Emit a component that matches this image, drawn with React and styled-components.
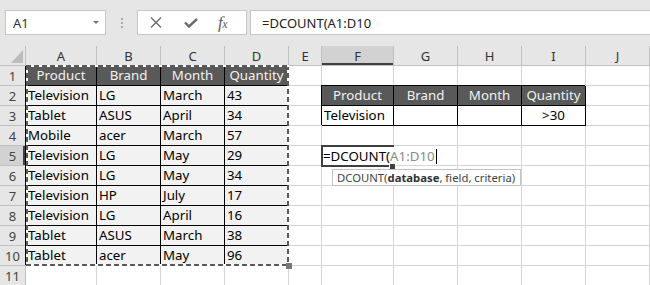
import styled, { createGlobalStyle } from 'styled-components';

const GlobalStyle = createGlobalStyle`
    html, body {
        margin: 0;
        padding: 0;
        background: #ffffff;
        overflow: hidden;
    }
    body {
        font-family: "Noto Sans", "Liberation Sans", sans-serif;
    }
`

const Window = styled.div`
    width: 650px;
    height: 285px;
    overflow: hidden;
    background: #ffffff;
`

const Toolbar = styled.div`
    height: 46px;
    box-sizing: border-box;
    padding: 10px 0 0 5px;
    background: #e6e6e6;
    display: flex;
    align-items: flex-start;
`

const NameBox = styled.div`
    width: 101px;
    height: 25px;
    box-sizing: border-box;
    background: #ffffff;
    border: 1px solid #c6c6c6;
    display: flex;
    align-items: center;
    justify-content: space-between;
    padding: 0 6px 0 7px;
    font-size: 13px;
    color: #333333;
`

const Caret = styled.span`
    width: 0;
    height: 0;
    border-left: 3.5px solid transparent;
    border-right: 3.5px solid transparent;
    border-top: 3.5px solid #6f6f6f;
`

const Dots = styled.div`
    width: 2px;
    margin: 8px 14px 0 15px;
    display: flex;
    flex-direction: column;
    gap: 2px;

    span {
        width: 2px;
        height: 2px;
        background: #a9a9a9;
    }
`

const FxBox = styled.div`
    width: 110px;
    height: 25px;
    box-sizing: border-box;
    background: #ffffff;
    border: 1px solid #c6c6c6;
    display: flex;
    align-items: center;
    padding-left: 12px;
    gap: 22px;
`

const FxLabel = styled.span`
    font-family: "Liberation Serif", "DejaVu Serif", serif;
    font-style: italic;
    font-size: 17px;
    color: #5f5f5f;
    margin-left: -2px;
    letter-spacing: -0.5px;

    small {
        font-size: 12px;
    }
`

const FormulaInput = styled.div`
    flex: 1;
    height: 25px;
    margin-left: 3px;
    box-sizing: border-box;
    background: #ffffff;
    border: 1px solid #c6c6c6;
    border-right: none;
    display: flex;
    align-items: center;
    padding-left: 11px;
    font-size: 13px;
    color: #222222;
`

const Sheet = styled.div`
    position: relative;
    display: grid;
    grid-template-columns: 26px 71px 64px 64px 64px 33px 72px 64px 64px 64px 64px;
    grid-auto-rows: 20px;
`

const Corner = styled.div`
    background: #e6e6e6;
    border-right: 1px solid #c0c0c0;
    border-bottom: 1px solid #c0c0c0;
    box-sizing: border-box;
    position: relative;

    svg {
        position: absolute;
        left: 11px;
        top: 4px;
    }
`

const ColHead = styled.div`
    box-sizing: border-box;
    background: ${(p) => (p.$active ? '#d2d2d2' : '#e6e6e6')};
    border-right: 1px solid #c0c0c0;
    border-bottom: 1px solid #c0c0c0;
    box-shadow: ${(p) => (p.$active ? 'inset 0 -2px 0 #404040' : 'none')};
    display: flex;
    align-items: center;
    justify-content: center;
    font-size: 13px;
    color: #333333;
`

const RowHead = styled.div`
    box-sizing: border-box;
    background: ${(p) => (p.$active ? '#d2d2d2' : '#e6e6e6')};
    border-right: 1px solid #c0c0c0;
    border-bottom: 1px solid #c0c0c0;
    box-shadow: ${(p) => (p.$active ? 'inset -2px 0 0 #404040' : 'none')};
    display: flex;
    align-items: center;
    justify-content: center;
    font-size: 13px;
    color: #444444;
`

const fills = {
    plain: '#ffffff',
    dark: '#595959',
    data: '#f2f2f2',
    boxed: '#ffffff',
}

const Cell = styled.div`
    box-sizing: border-box;
    background: ${(p) => fills[p.$kind]};
    border-right: 1px solid ${(p) => (p.$kind === 'plain' ? '#d4d4d4' : '#000000')};
    border-bottom: 1px solid ${(p) => (p.$kind === 'plain' ? '#d4d4d4' : '#000000')};
    box-shadow: ${(p) => (p.$kind === 'plain' ? 'none' : '-1px -1px 0 #000000')};
    color: ${(p) => (p.$kind === 'dark' ? '#f2f2f2' : '#000000')};
    text-align: ${(p) => p.$align};
    font-size: 13.3px;
    line-height: 19px;
    padding: 0 2px;
    white-space: nowrap;
    overflow: hidden;
`

const Ants = styled.div`
    position: absolute;
    left: 26px;
    top: 19px;
    width: 263px;
    height: 201px;
    pointer-events: none;
    background:
        repeating-linear-gradient(90deg, #5a5a5a 0 5px, #ffffff 5px 8px) top left / 100% 2px no-repeat,
        repeating-linear-gradient(90deg, #5a5a5a 0 5px, #ffffff 5px 8px) bottom left / 100% 2px no-repeat,
        repeating-linear-gradient(180deg, #5a5a5a 0 5px, #ffffff 5px 8px) top left / 2px 100% no-repeat,
        repeating-linear-gradient(180deg, #5a5a5a 0 5px, #ffffff 5px 8px) top right / 2px 100% no-repeat;

    &::after {
        content: '';
        position: absolute;
        right: -3px;
        bottom: -3px;
        width: 6px;
        height: 6px;
        background: #777777;
    }
`

const ActiveBox = styled.div`
    position: absolute;
    left: 321px;
    top: 99px;
    width: 73px;
    height: 22px;
    box-sizing: border-box;
    border: 2px solid #3f3f3f;
`

const FillHandle = styled.div`
    position: absolute;
    left: 390px;
    top: 118px;
    width: 5px;
    height: 5px;
    background: #3f3f3f;
    outline: 1px solid #ffffff;
`

const Editor = styled.div`
    position: absolute;
    left: 323px;
    top: 101px;
    height: 18px;
    padding-right: 4px;
    background: #ffffff;
    display: flex;
    align-items: center;
    font-size: 13.3px;
    color: #000000;
    white-space: nowrap;

    span.ref {
        color: #8a8a8a;
    }

    i {
        display: inline-block;
        width: 1px;
        height: 15px;
        background: #000000;
        margin-left: 1px;
    }
`

const Tip = styled.div`
    position: absolute;
    left: 332px;
    top: 123px;
    height: 17px;
    box-sizing: border-box;
    padding: 0 5px 0 4px;
    background: #ffffff;
    border: 1px solid #c3c3c3;
    font-size: 11.3px;
    line-height: 15px;
    color: #444444;
    white-space: nowrap;

    b {
        font-weight: 700;
        color: #333333;
    }
`

const letters = ['A', 'B', 'C', 'D', 'E', 'F', 'G', 'H', 'I', 'J'];

const data = [
    ['Product', 'Brand', 'Month', 'Quantity'],
    ['Television', 'LG', 'March', '43'],
    ['Tablet', 'ASUS', 'April', '34'],
    ['Mobile', 'acer', 'March', '57'],
    ['Television', 'LG', 'May', '29'],
    ['Television', 'LG', 'May', '34'],
    ['Television', 'HP', 'July', '17'],
    ['Television', 'LG', 'April', '16'],
    ['Tablet', 'ASUS', 'March', '38'],
    ['Tablet', 'acer', 'May', '96'],
];

const criteria = [
    ['Product', 'Brand', 'Month', 'Quantity'],
    ['Television', '', '', '>30'],
];

function cellFor(row, col) {
    if (row <= 10 && col <= 3) {
        const text = data[row - 1][col];
        return row === 1
            ? { text, kind: 'dark', align: 'center' }
            : { text, kind: 'data', align: 'left' };
    }
    if ((row === 2 || row === 3) && col >= 5 && col <= 8) {
        const text = criteria[row - 2][col - 5];
        if (row === 2) return { text, kind: 'dark', align: 'center' };
        return { text, kind: 'boxed', align: col === 8 ? 'center' : 'left' };
    }
    return { text: '', kind: 'plain', align: 'left' };
}

function CrossIcon() {
    return (
        <svg width="12" height="11" viewBox="0 0 12 11">
            <path d="M1 0.5 L11 10.5 M11 0.5 L1 10.5" stroke="#6b6b6b" strokeWidth="1.4" fill="none" />
        </svg>
    )
}

function CheckIcon() {
    return (
        <svg width="14" height="10" viewBox="0 0 14 10">
            <path d="M1 4.5 L5 8.5 L13 1" stroke="#6b6b6b" strokeWidth="2.4" fill="none" />
        </svg>
    )
}

export default function App() {
    const rows = [];
    for (let r = 1; r <= 11; r++) {
        rows.push(<RowHead key={`h${r}`} $active={r === 5}>{r}</RowHead>);
        for (let c = 0; c < 10; c++) {
            const cell = cellFor(r, c);
            rows.push(
                <Cell key={`c${r}-${c}`} $kind={cell.kind} $align={cell.align}>
                    {cell.text}
                </Cell>
            );
        }
    }

    return (
        <Window>
            <GlobalStyle />
            <Toolbar>
                <NameBox>
                    A1
                    <Caret />
                </NameBox>
                <Dots><span /><span /><span /></Dots>
                <FxBox>
                    <CrossIcon />
                    <CheckIcon />
                    <FxLabel>f<small>x</small></FxLabel>
                </FxBox>
                <FormulaInput>=DCOUNT(A1:D10</FormulaInput>
            </Toolbar>
            <Sheet>
                <Corner>
                    <svg width="12" height="13" viewBox="0 0 12 13">
                        <polygon points="12,0 12,13 0,13" fill="#bcbcbc" />
                    </svg>
                </Corner>
                {letters.map((l) => (
                    <ColHead key={l} $active={l === 'F'}>{l}</ColHead>
                ))}
                {rows}
                <Ants />
                <ActiveBox />
                <Editor>
                    =DCOUNT(<span className="ref">A1:D10</span><i />
                </Editor>
                <FillHandle />
                <Tip>
                    DCOUNT(<b>database</b>, field, criteria)
                </Tip>
            </Sheet>
        </Window>
    )
}
